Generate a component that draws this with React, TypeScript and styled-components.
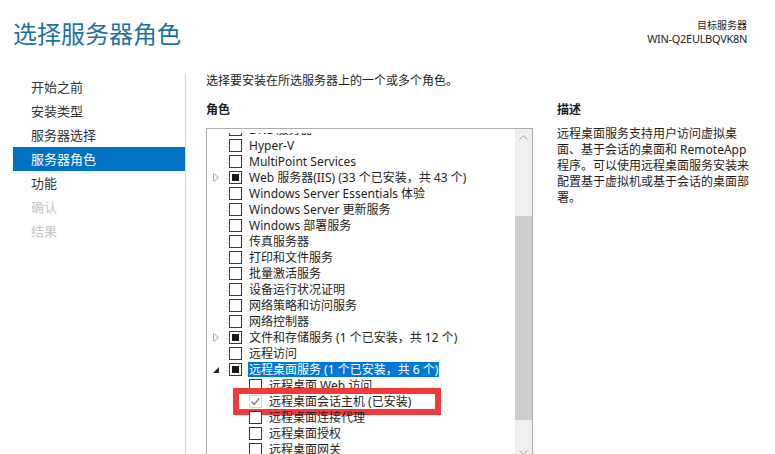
import React from 'react'
import styled, { createGlobalStyle } from 'styled-components'

const GlobalStyle = createGlobalStyle`
  html, body {
    margin: 0;
    padding: 0;
    background: #ffffff;
  }
  body {
    font-family: "Segoe UI", "Noto Sans", "Noto Sans CJK SC", sans-serif;
    color: #1e1e1e;
  }
`

const Page = styled.div`
  width: 775px;
  height: 454px;
  overflow: hidden;
  display: flex;
  flex-direction: column;
  background: #ffffff;
`

const Header = styled.div`
  height: 73px;
  display: flex;
  justify-content: space-between;
  align-items: flex-start;
  padding: 0 28px 0 13px;
  box-sizing: border-box;
  flex-shrink: 0;
`

const Title = styled.h1`
  margin: 18px 0 0 0;
  font-size: 24px;
  line-height: 32px;
  font-weight: 400;
  color: #1c71a4;
`

const Target = styled.div`
  margin-top: 19px;
  text-align: right;
  color: #1e1e1e;
`

const TargetLabel = styled.div`
  font-size: 10px;
  line-height: 13px;
`

const TargetName = styled.div`
  font-size: 11px;
  line-height: 13px;
  letter-spacing: -0.3px;
`

const Body = styled.div`
  flex: 1;
  display: flex;
  min-height: 0;
`

const Nav = styled.nav`
  flex-shrink: 0;
  border-right: 1px solid #d6d6d6;
  padding: 2px 0 0 13px;
  width: 172px;
`

const NavItem = styled.div<{ $active?: boolean; $disabled?: boolean }>`
  height: 24px;
  line-height: 24px;
  padding-left: 18px;
  font-size: 13px;
  background: ${p => (p.$active ? '#0072c6' : 'transparent')};
  color: ${p => (p.$active ? '#ffffff' : p.$disabled ? '#c6c6c6' : '#333333')};
`

const Main = styled.div`
  display: flex;
  flex-direction: column;
  padding-left: 20px;
  width: 327px;
  flex-shrink: 0;
`

const Intro = styled.div`
  font-size: 12px;
  line-height: 16px;
`

const SectionHeading = styled.div`
  font-size: 12px;
  line-height: 16px;
  font-weight: 700;
`

const RolesHeading = styled(SectionHeading)`
  margin-top: 13px;
`

const ListBox = styled.div`
  margin-top: 10px;
  height: 334px;
  border: 1px solid #abadb3;
  display: flex;
  flex-shrink: 0;
  box-sizing: border-box;
`

const ListViewport = styled.div`
  flex: 1;
  overflow: hidden;
  border-top: 4px solid #ffffff;
`

const ListContent = styled.div<{ $scroll: number }>`
  margin-top: ${p => -p.$scroll}px;
  padding-left: 6px;
`

const Row = styled.div<{ $level: number }>`
  position: relative;
  height: 16px;
  display: flex;
  align-items: center;
  padding-left: ${p => p.$level * 20}px;
  font-size: 12px;
  white-space: nowrap;
`

const ExpanderSlot = styled.span`
  width: 16px;
  height: 16px;
  display: flex;
  align-items: center;
  justify-content: flex-start;
  flex-shrink: 0;
`

const Box = styled.span<{ $muted?: boolean }>`
  width: 13px;
  height: 13px;
  box-sizing: border-box;
  border: 1px solid ${p => (p.$muted ? '#d8d8d8' : '#3a3a3a')};
  background: #ffffff;
  display: flex;
  align-items: center;
  justify-content: center;
  flex-shrink: 0;
`

const PartialMark = styled.span`
  width: 7px;
  height: 7px;
  background: #1a1a1a;
`

const Label = styled.span<{ $selected?: boolean }>`
  margin-left: 6px;
  padding: 0 1px;
  line-height: 15px;
  background: ${p => (p.$selected ? '#0078d7' : 'transparent')};
  color: ${p => (p.$selected ? '#ffffff' : '#1e1e1e')};
`

const Callout = styled.span`
  position: absolute;
  left: 20px;
  top: -5px;
  width: 208px;
  height: 27px;
  box-sizing: border-box;
  border: 6px solid #f23a3a;
  pointer-events: none;
`

const ScrollBar = styled.div`
  width: 17px;
  flex-shrink: 0;
  background: #f0f0f0;
  display: flex;
  flex-direction: column;
`

const ScrollButton = styled.div`
  height: 17px;
  display: flex;
  align-items: center;
  justify-content: center;
  flex-shrink: 0;
`

const ScrollTrack = styled.div`
  flex: 1;
`

const Thumb = styled.div`
  margin-top: 70px;
  height: 204px;
  background: #cdcdcd;
`

const Description = styled.div`
  padding-left: 24px;
  padding-top: 29px;
  flex: 1;
`

const DescriptionText = styled.div`
  margin-top: 8px;
  font-size: 12px;
  line-height: 16px;
  white-space: pre-line;
`

type CheckState = 'none' | 'partial' | 'checked'

type Role = {
  label: string
  state?: CheckState
  expander?: 'closed' | 'open'
  level?: number
  selected?: boolean
  marked?: boolean
}

const roles: Role[] = [
  { label: 'DNS 服务器' },
  { label: 'Hyper-V' },
  { label: 'MultiPoint Services' },
  { label: 'Web 服务器(IIS) (33 个已安装，共 43 个)', state: 'partial', expander: 'closed' },
  { label: 'Windows Server Essentials 体验' },
  { label: 'Windows Server 更新服务' },
  { label: 'Windows 部署服务' },
  { label: '传真服务器' },
  { label: '打印和文件服务' },
  { label: '批量激活服务' },
  { label: '设备运行状况证明' },
  { label: '网络策略和访问服务' },
  { label: '网络控制器' },
  { label: '文件和存储服务 (1 个已安装，共 12 个)', state: 'partial', expander: 'closed' },
  { label: '远程访问' },
  { label: '远程桌面服务 (1 个已安装，共 6 个)', state: 'partial', expander: 'open', selected: true },
  { label: '远程桌面 Web 访问', level: 1 },
  { label: '远程桌面会话主机 (已安装)', level: 1, state: 'checked', marked: true },
  { label: '远程桌面连接代理', level: 1 },
  { label: '远程桌面授权', level: 1 },
  { label: '远程桌面网关', level: 1 },
  { label: '远程桌面虚拟化主机', level: 1 },
]

const navItems = [
  { label: '开始之前' },
  { label: '安装类型' },
  { label: '服务器选择' },
  { label: '服务器角色', active: true },
  { label: '功能' },
  { label: '确认', disabled: true },
  { label: '结果', disabled: true },
]

const Expander = ({ kind }: { kind?: 'closed' | 'open' }) => {
  if (kind === 'closed') {
    return (
      <svg width="7" height="9" viewBox="0 0 7 9">
        <polygon points="0.5,0.5 5.5,4.5 0.5,8.5" fill="none" stroke="#a6a6a6" strokeWidth="1" />
      </svg>
    )
  }
  if (kind === 'open') {
    return (
      <svg width="7" height="9" viewBox="0 0 7 9">
        <polygon points="6,2 6,8 0,8" fill="#262626" />
      </svg>
    )
  }
  return null
}

const CheckBox = ({ state = 'none' }: { state?: CheckState }) => (
  <Box $muted={state === 'checked'}>
    {state === 'partial' && <PartialMark />}
    {state === 'checked' && (
      <svg width="11" height="11" viewBox="0 0 11 11">
        <path d="M1.5 5.5 L4.2 8.3 L9.5 2.2" fill="none" stroke="#8a8a8a" strokeWidth="1.6" />
      </svg>
    )}
  </Box>
)

const Chevron = ({ up }: { up?: boolean }) => (
  <svg width="9" height="5" viewBox="0 0 9 5">
    <path d={up ? 'M0.5 4.5 L4.5 0.8 L8.5 4.5' : 'M0.5 0.5 L4.5 4.2 L8.5 0.5'} fill="none" stroke="#a0a0a0" strokeWidth="1" />
  </svg>
)

const App = () => {
  return (
    <>
      <GlobalStyle />
      <Page>
        <Header>
          <Title>选择服务器角色</Title>
          <Target>
            <TargetLabel>目标服务器</TargetLabel>
            <TargetName>WIN-Q2EULBQVK8N</TargetName>
          </Target>
        </Header>
        <Body>
          <Nav>
            {navItems.map(item => (
              <NavItem key={item.label} $active={item.active} $disabled={item.disabled}>
                {item.label}
              </NavItem>
            ))}
          </Nav>
          <Main>
            <Intro>选择要安装在所选服务器上的一个或多个角色。</Intro>
            <RolesHeading>角色</RolesHeading>
            <ListBox>
              <ListViewport>
                <ListContent $scroll={12}>
                  {roles.map(role => (
                    <Row key={role.label} $level={role.level ?? 0}>
                      <ExpanderSlot>
                        <Expander kind={role.expander} />
                      </ExpanderSlot>
                      <CheckBox state={role.state} />
                      <Label $selected={role.selected}>{role.label}</Label>
                      {role.marked && <Callout />}
                    </Row>
                  ))}
                </ListContent>
              </ListViewport>
              <ScrollBar>
                <ScrollButton>
                  <Chevron up />
                </ScrollButton>
                <ScrollTrack>
                  <Thumb />
                </ScrollTrack>
                <ScrollButton>
                  <Chevron />
                </ScrollButton>
              </ScrollBar>
            </ListBox>
          </Main>
          <Description>
            <SectionHeading>描述</SectionHeading>
            <DescriptionText>
              {'远程桌面服务支持用户访问虚拟桌\n面、基于会话的桌面和 RemoteApp\n程序。可以使用远程桌面服务安装来\n配置基于虚拟机或基于会话的桌面部\n署。'}
            </DescriptionText>
          </Description>
        </Body>
      </Page>
    </>
  )
}

export default App
